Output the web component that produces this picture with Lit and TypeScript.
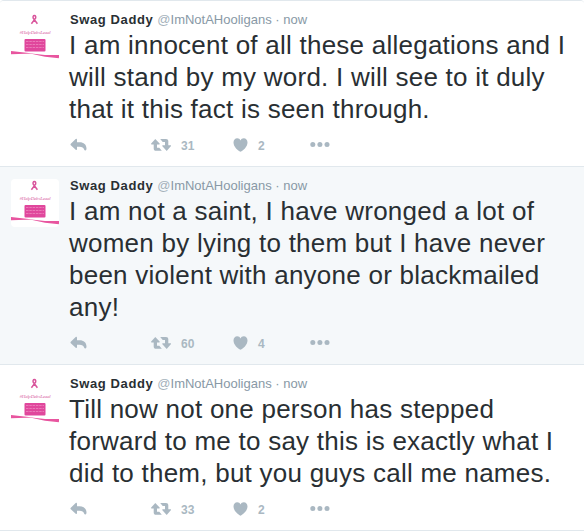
import { LitElement, html, css, svg } from "lit";
import { customElement, property } from "lit/decorators.js";

interface Tweet {
  lines: string[];
  retweets: number;
  likes: number;
  active?: boolean;
}

const tweets: Tweet[] = [
  {
    lines: [
      "I am innocent of all these allegations and I",
      "will stand by my word. I will see to it duly",
      "that it this fact is seen through.",
    ],
    retweets: 31,
    likes: 2,
  },
  {
    lines: [
      "I am not a saint, I have wronged a lot of",
      "women by lying to them but I have never",
      "been violent with anyone or blackmailed",
      "any!",
    ],
    retweets: 60,
    likes: 4,
    active: true,
  },
  {
    lines: [
      "Till now not one person has stepped",
      "forward to me to say this is exactly what I",
      "did to them, but you guys call me names.",
    ],
    retweets: 33,
    likes: 2,
  },
];

const avatar = svg`
  <rect width="48" height="48" fill="#fff"/>
  <path d="M20.400 10.800 L24.600 5.200 Q25.200 2.700 23.400 2.600 Q21.600 2.700 22.200 5.200 L26.400 10.800" fill="none" stroke="#d9559c" stroke-width="1.500"/>
  <text x="24" y="21" text-anchor="middle" class="tag">#HelpDebsLeaal</text>
  <rect x="13.500" y="26" width="21" height="12.500" rx="1" fill="#e0479c"/>
  <path d="M15 28.500h18M15 31.500h18M15 34.500h18" stroke="#ef8fc4" stroke-width=".7" stroke-dasharray="2.500 .8"/>
  <path d="M0 38 L22 40.400 L0 41.300Z" fill="#e8559f"/>
  <path d="M18 40.200 L34 42 L48 42 V45.300 L34 43.800Z" fill="#e8559f"/>`;

@customElement("tweet-item")
class TweetItem extends LitElement {
  @property({ attribute: false }) tweet!: Tweet;

  static styles = css`
    :host { display: block; }
    .tweet {
      box-sizing: border-box;
      display: flex;
      gap: 10px;
      padding: 12px 0 13px 11px;
      border-bottom: 1px solid #e1e8ed;
      background: #fff;
    }
    .active { background: #f5f8fa; }
    .avatar { width: 48px; height: 48px; border-radius: 4px; flex: none; display: block; }
    .tag { font: italic 5px "Liberation Serif", serif; letter-spacing: -0.2px; fill: #d965a6; }
    .body { flex: 1; min-width: 0; }
    .head {
      height: 16px;
      line-height: 14px;
      padding-left: 1px;
      font-size: 13px;
      white-space: pre;
      color: #8899a6;
    }
    .name { font-weight: bold; color: #292f33; letter-spacing: 0.6px; }
    .handle { margin-left: 0.4px; }
    .at { color: #a5b2bc; }
    .text { font-size: 26px; line-height: 32px; letter-spacing: 0.24px; color: #292f33; white-space: nowrap; }
    .actions {
      display: grid;
      grid-template-columns: 81px 81.5px 77.5px auto;
      align-items: center;
      height: 16px;
      margin-top: 12px;
      padding-left: 1px;
      color: #aab8c2;
    }
    .action { display: flex; align-items: center; height: 16px; }
    .count { font: bold 12px/16px "Liberation Sans", Arial, sans-serif; padding-top: 1px; }
    .retweet .count { margin-left: 10px; }
    .like .count { margin-left: 10.5px; }
    svg { display: block; fill: currentColor; }
  `;

  render() {
    const t = this.tweet;
    return html`
      <article class="tweet ${t.active ? "active" : ""}">
        <svg class="avatar" viewBox="0 0 48 48">${avatar}</svg>
        <div class="body">
          <div class="head"><span class="name">Swag Daddy</span> <span class="handle"><span class="at">@</span>ImNotAHooligans</span><span class="time"> · now</span></div>
          <div class="text">${t.lines.map((l) => html`<div class="line">${l}</div>`)}</div>
          <div class="actions">
            <span class="action">
              <svg width="17" height="14" viewBox="0 0 17 14"><path d="M7 1.700V4.300h2.500c4.300 0 7 2.400 7 6.300 0 .9-.3 1.800-1.100 1.800-.7 0-1.100-.4-1.300-1-.6-1.800-2-2.700-4.600-2.700H7V11.200c0 .8-.7 1-1.300.6L.8 7.300C.3 6.800.3 6.200.8 5.700L5.700 1.100C6.300.6 7 .9 7 1.700z"/></svg>
            </span>
            <span class="action retweet">
              <svg width="20" height="14" viewBox="0 0 20 14"><path d="M4.300.9.2 5.500c-.4.500-.2 1 .4 1H2.700V10.500c0 1.400.9 2.300 2.300 2.300h5.800L8.300 9.800H6V6.500h2.200c.6 0 .8-.5.4-1zM9.200 1h5.800c1.400 0 2.300.9 2.300 2.300V7.300h2.100c.6 0 .8.5.4 1L15.700 13 11.400 8.300c-.4-.5-.2-1 .4-1H14V4H11.700z"/></svg>
              <span class="count">${t.retweets}</span>
            </span>
            <span class="action like">
              <svg width="15" height="14" viewBox="0 0 15 14"><path d="M7.500 13.700C5 12.600.5 8.800.5 4.400.5 2.100 2.100.2 4.200.2c1.600 0 2.700.9 3.300 2.200C8.100 1.100 9.200.2 10.800.2c2.100 0 3.700 1.900 3.700 4.200 0 4.400-4.500 8.200-7 9.300z"/></svg>
              <span class="count">${t.likes}</span>
            </span>
            <span class="action">
              <svg width="20" height="6" viewBox="0 0 20 6"><circle cx="2.800" cy="2.500" r="2.500"/><circle cx="9.900" cy="2.500" r="2.500"/><circle cx="17" cy="2.500" r="2.500"/></svg>
            </span>
          </div>
        </div>
      </article>
    `;
  }
}

@customElement("app-root")
class AppRoot extends LitElement {
  static styles = css`
    :host {
      display: block;
      box-sizing: border-box;
      height: 532px;
      overflow: hidden;
      border-top: 1px solid #e1e8ed;
      border-radius: 4px 4px 0 0;
      background: #fff;
      font-family: "Liberation Sans", Arial, sans-serif;
    }
  `;

  render() {
    return tweets.map((t) => html`<tweet-item .tweet=${t}></tweet-item>`);
  }
}
